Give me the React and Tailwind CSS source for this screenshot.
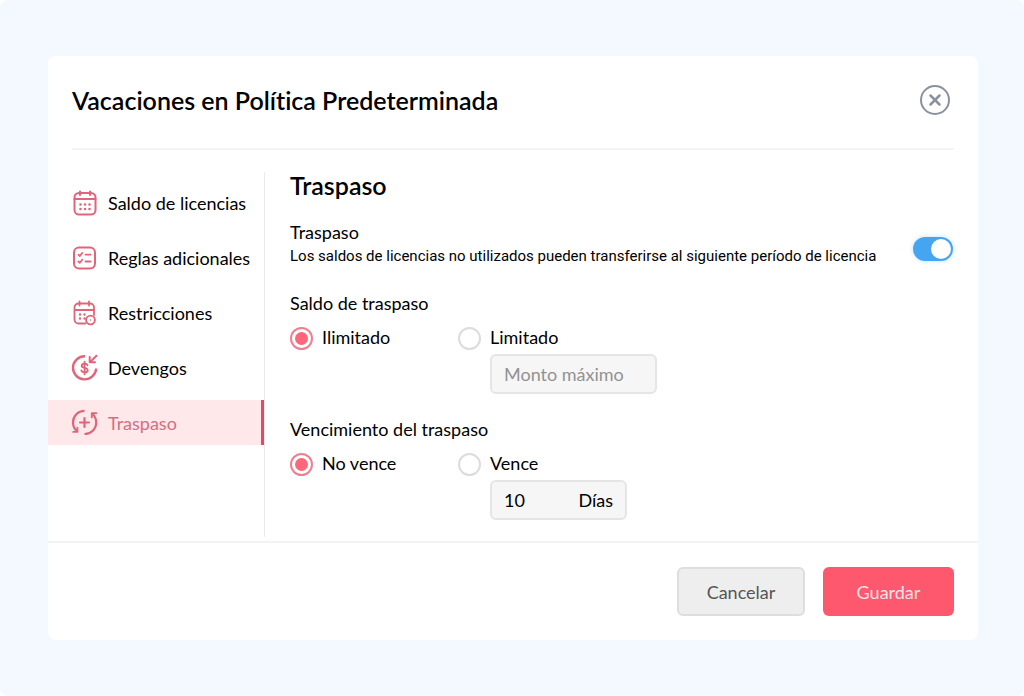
import { useState } from "react";

const navItems = [
  { id: "balance", label: "Saldo de licencias", icon: CalendarIcon },
  { id: "rules", label: "Reglas adicionales", icon: ChecklistIcon },
  { id: "restrictions", label: "Restricciones", icon: CalendarClockIcon },
  { id: "accruals", label: "Devengos", icon: AccrualIcon },
  { id: "carryover", label: "Traspaso", icon: CarryoverIcon },
];

export default function App() {
  const [section, setSection] = useState("carryover");
  const [enabled, setEnabled] = useState(true);
  const [balance, setBalance] = useState("unlimited");
  const [expiry, setExpiry] = useState("never");

  return (
    <div className="bg-white font-['Lato',sans-serif] text-black [font-variant-ligatures:none]">
      <div className="min-h-screen rounded-lg bg-[#f4f8ff] pt-14 pr-[46px] pb-12 pl-12">
        <div className="rounded-lg bg-white">
          <header className="px-6">
            <div className="flex h-[94px] items-center justify-between border-b-2 border-[#f5f5f6] pb-1">
              <h1 className="text-[25px] leading-8 font-semibold">Vacaciones en Política Predeterminada</h1>
              <button type="button" aria-label="Cerrar" className="mr-1 text-[#8b919e]">
                <CloseIcon />
              </button>
            </div>
          </header>

          <div className="flex pt-[22px] pb-1">
            <nav className="flex w-[217px] shrink-0 flex-col gap-2.5 border-r border-[#ebebed] pt-2">
              {navItems.map(({ id, label, icon: Icon }) => (
                <button
                  key={id}
                  type="button"
                  onClick={() => setSection(id)}
                  className={
                    section === id
                      ? "flex h-[45px] items-center gap-2.5 border-r-[3px] border-[#dc4c66] bg-[#fee8ea] pl-[23px] text-lg text-[#dd6a7f]"
                      : "flex h-[45px] items-center gap-2.5 pl-[23px] text-lg"
                  }
                >
                  <Icon />
                  <span className="whitespace-nowrap">{label}</span>
                </button>
              ))}
            </nav>

            <main className="min-w-0 flex-1 pr-[25px] pb-[17px] pl-[25px]">
              <h2 className="text-[25px] leading-[26px] font-semibold">Traspaso</h2>

              <div className="mt-[22px] flex items-center justify-between">
                <div>
                  <label htmlFor="carryover" className="block text-lg leading-6">Traspaso</label>
                  <p id="carryover-help" className="font-['Roboto',sans-serif] text-[15px] leading-6">
                    Los saldos de licencias no utilizados pueden transferirse al siguiente período de licencia
                  </p>
                </div>
                <input
                  id="carryover"
                  type="checkbox"
                  role="switch"
                  aria-describedby="carryover-help"
                  checked={enabled}
                  onChange={(e) => setEnabled(e.target.checked)}
                  className="mt-2.5 flex h-6 w-10 shrink-0 appearance-none items-center rounded-full bg-gray-300 p-0.5 before:size-5 before:rounded-full before:bg-white checked:justify-end checked:bg-[#45a5f1] checked:shadow-[0_0_5px_#45a5f155]"
                />
              </div>

              <fieldset className="mt-[23px]">
                <legend className="text-lg leading-6">Saldo de traspaso</legend>
                <div className="mt-2.5 flex">
                  <div className="w-[168px]">
                    <Radio name="balance" value="unlimited" current={balance} onChange={setBalance} label="Ilimitado" />
                  </div>
                  <div>
                    <Radio name="balance" value="limited" current={balance} onChange={setBalance} label="Limitado" />
                    <input
                      type="text"
                      aria-label="Monto máximo"
                      placeholder="Monto máximo"
                      className="mt-1 ml-8 block h-10 w-[167px] rounded-md border-2 border-[#e5e5e5] bg-[#f6f6f6] px-3 text-lg placeholder:text-[#929292]"
                    />
                  </div>
                </div>
              </fieldset>

              <fieldset className="mt-[23px]">
                <legend className="text-lg leading-6">Vencimiento del traspaso</legend>
                <div className="mt-2.5 flex">
                  <div className="w-[168px]">
                    <Radio name="expiry" value="never" current={expiry} onChange={setExpiry} label="No vence" />
                  </div>
                  <div>
                    <Radio name="expiry" value="expires" current={expiry} onChange={setExpiry} label="Vence" />
                    <label className="mt-1 ml-8 flex h-10 w-[137px] items-center justify-between rounded-md border-2 border-[#e5e5e5] bg-[#f6f6f6] px-3 text-lg">
                      <input type="text" inputMode="numeric" defaultValue="10" className="w-12 bg-transparent" />
                      <span>Días</span>
                    </label>
                  </div>
                </div>
              </fieldset>
            </main>
          </div>

          <footer className="flex justify-end gap-[18px] border-t-2 border-[#f3f3f4] pt-6 pr-6 pb-6">
            <button type="button" className="h-[49px] w-32 rounded-md border-2 border-[#dedede] bg-[#eeeeee] text-lg text-[#555555]">
              Cancelar
            </button>
            <button type="button" className="h-[49px] w-[131px] rounded-md bg-[#fd586d] text-lg text-[#ffe3e8]">
              Guardar
            </button>
          </footer>
        </div>
      </div>
    </div>
  );
}

function Radio({ name, value, current, onChange, label }) {
  return (
    <label className="flex items-start gap-[9px] text-lg leading-6">
      <input
        type="radio"
        name={name}
        value={value}
        checked={current === value}
        onChange={() => onChange(value)}
        className="mt-0.5 size-[23px] shrink-0 appearance-none rounded-full border-2 border-[#dcdcdc] bg-clip-content p-[3px] checked:border-[#ee7f92] checked:bg-[#ff6679]"
      />
      {label}
    </label>
  );
}

function Icon({ children }) {
  return (
    <svg
      className="size-[27px] shrink-0 text-[#e2647a]"
      viewBox="0 0 27 27"
      fill="none"
      stroke="currentColor"
      strokeWidth="2"
      strokeLinecap="round"
      strokeLinejoin="round"
      aria-hidden="true"
    >
      {children}
    </svg>
  );
}

function CalendarIcon() {
  return (
    <Icon>
      <rect x="3.5" y="4" width="21" height="21.5" rx="4.5" />
      <path d="M3.5 10h21M9 2.500v3.500M19 2.500v3.500" />
      <path strokeWidth="2.6" d="M9.5 15.500h.01M14 15.500h.01M18.5 15.500h.01M9.5 20h.01M14 20h.01M18.5 20h.01" />
    </Icon>
  );
}

function ChecklistIcon() {
  return (
    <Icon>
      <rect x="3" y="3.500" width="21" height="21" rx="5" />
      <path strokeWidth="1.8" d="M7.500 10.700l1.3 1.3 2.4-3M14.500 10.700h5M7.500 17.500l1.3 1.3 2.4-3M14.500 17.500h5" />
    </Icon>
  );
}

function CalendarClockIcon() {
  return (
    <Icon>
      <path strokeWidth="1.8" d="M14.500 24.500H7.500a4 4 0 0 1-4-4V8.500a4 4 0 0 1 4-4h11.500a4 4 0 0 1 4 4v7.500M3.500 11h19.500M8.500 2.500v4M18 2.500v4" />
      <path strokeWidth="2.400" d="M9 15.500h.01M13.500 15.500h.01M9 19.500h.01M13.500 19.500h.01" />
      <circle cx="19.500" cy="21" r="4.400" strokeWidth="1.900" />
      <path strokeWidth="1.500" d="M19.500 21h.01" />
    </Icon>
  );
}

function AccrualIcon() {
  return (
    <Icon>
      <path strokeWidth="2.400" strokeLinecap="butt" d="M14 2.200A11.600 11.600 0 1 0 25.200 14.500" />
      <path strokeWidth="2" d="M25.500 1.800l-6.500 6.300M18.700 3v5.300H24" />
      <path strokeWidth="1.900" d="M16.500 11.300c-.4-1.200-1.400-1.700-2.900-1.700-1.700 0-2.900.8-2.900 2.100 0 3 6 1.300 6 4.500 0 1.400-1.300 2.200-3.100 2.200-1.700 0-2.900-.7-3.200-2M13.600 7.800v12.400" />
    </Icon>
  );
}

function CarryoverIcon() {
  return (
    <Icon>
      <path strokeWidth="2.200" strokeLinecap="butt" d="M13.500 1.900C7 1.900 2 7 2 13.500c0 3.500 1.400 6.300 3.700 8.400M13.500 25C20 25 25.200 20 25.200 13.500c0-3.500-1.500-6.500-3.700-8.500" />
      <path strokeWidth="1.900" d="M2.200 22.900h4.200v-4.200M25.200 4.200h-4.400v4.200" />
      <path strokeWidth="2.200" d="M13.500 9v9M9 13.500h9" />
    </Icon>
  );
}

function CloseIcon() {
  return (
    <svg className="size-[30px]" viewBox="0 0 30 30" fill="none" stroke="currentColor" strokeLinecap="round" aria-hidden="true">
      <circle cx="15" cy="15" r="14" strokeWidth="2" />
      <path strokeWidth="2.500" d="M10.500 10.500l9 9M19.500 10.500l-9 9" />
    </svg>
  );
}
